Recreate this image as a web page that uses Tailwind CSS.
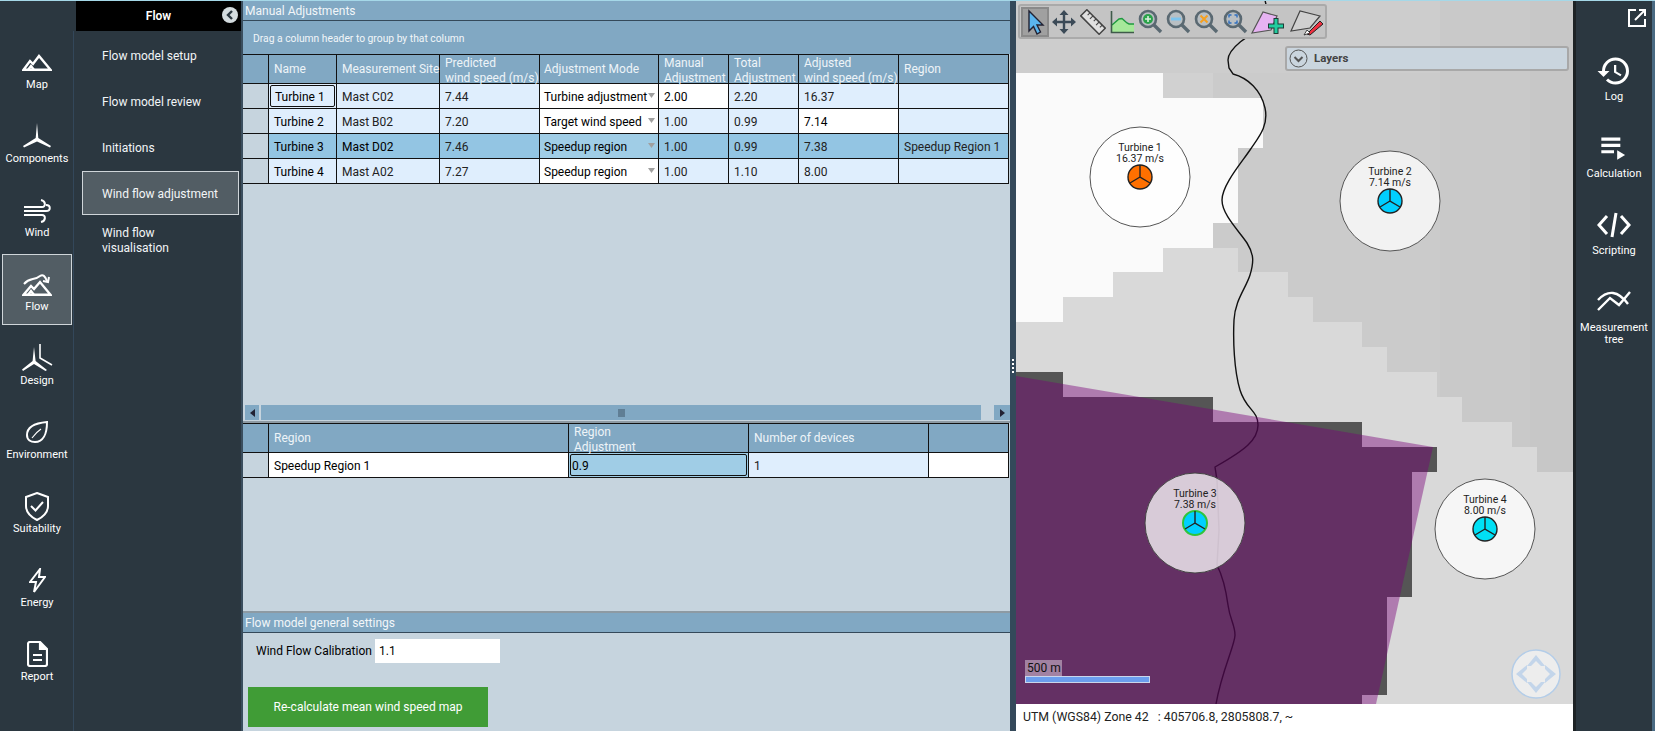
<!DOCTYPE html>
<html lang="en">
<head>
    <meta charset="UTF-8">
    <title>Wind flow adjustment</title>
    <script src="https://cdn.jsdelivr.net/npm/@tailwindcss/browser@4"></script>
</head>
<body class="w-[1655px] h-[731px] overflow-hidden bg-[#2b3740] font-['Roboto',sans-serif] text-[12px]">
<div class="h-px bg-[#a5d8e8]"></div>
<div class="flex h-[730px]">

    <!-- Left rail -->
    <div class="w-[73px] shrink-0 pt-[31px] pl-[2px] text-[11px] text-white">
        <div class="w-[70px] h-[71px] mb-[3px] border border-transparent pt-[13px] flex flex-col items-center">
            <div class="h-[32px] flex items-center"><svg width="30" height="17" viewBox="0 0 30 17" fill="none" stroke="white" stroke-width="2.4"><path d="M1.5 15.8H28.5L17 2L11 10L8 7Z"/><path d="M6 16L9 12L12 16"/></svg></div>
            <div class="-mt-px h-4 leading-4">Map</div>
        </div>
        <div class="w-[70px] h-[71px] mb-[3px] border border-transparent pt-[13px] flex flex-col items-center">
            <div class="h-[32px] flex items-center"><svg width="30" height="26" viewBox="0 0 30 26" fill="white"><path d="M15 0L16.3 15L29 23L28 24.5L15 18.5L2 24.5L1 23L13.7 15Z"/></svg></div>
            <div class="-mt-px h-4 leading-4">Components</div>
        </div>
        <div class="w-[70px] h-[71px] mb-[3px] border border-transparent pt-[13px] flex flex-col items-center">
            <div class="h-[32px] flex items-center"><svg width="28" height="25" viewBox="0 0 28 25" fill="none" stroke="white" stroke-width="2"><path d="M1 9H19C23 9 23 3 18 2"/><path d="M1 13H23C28 13 28 7 23 7"/><path d="M1 17H19C23 17 23 23 18 24"/></svg></div>
            <div class="-mt-px h-4 leading-4">Wind</div>
        </div>
        <div class="w-[70px] h-[71px] mb-[3px] border border-[#cfd5d9] bg-[#525d64] pt-[13px] flex flex-col items-center">
            <div class="h-[32px] flex items-center"><svg width="30" height="23" viewBox="0 0 30 23" fill="none" stroke="white" stroke-width="2.4"><path d="M1.5 21.8H28.5L18 9L12 16L9 13Z"/><path d="M6 22L9 18L12 22"/><path d="M2 11C8 4 12 8 18 3C21 1 23 3 25 8" stroke-width="2"/><path d="M21 8L26 9L27 4" stroke-width="2"/></svg></div>
            <div class="-mt-px h-4 leading-4">Flow</div>
        </div>
        <div class="w-[70px] h-[71px] mb-[3px] border border-transparent pt-[13px] flex flex-col items-center">
            <div class="h-[32px] flex items-center"><svg width="32" height="28" viewBox="0 0 32 28" fill="white"><path d="M13 3L14.6 17L26 26L24.5 27L13 20L2 27L1 25.5L11.6 17Z"/><path d="M19 0V14L31 21" fill="none" stroke="white" stroke-width="1.6"/></svg></div>
            <div class="-mt-px h-4 leading-4">Design</div>
        </div>
        <div class="w-[70px] h-[71px] mb-[3px] border border-transparent pt-[13px] flex flex-col items-center">
            <div class="h-[32px] flex items-center"><svg width="22" height="22" viewBox="0 0 22 22" fill="none" stroke="white" stroke-width="2"><path d="M21 1C10 2 1 5 1 14C1 19 5 21 9 21C17 21 21 13 21 1Z"/><path d="M6 17C9 13 12 10 15 8" stroke-width="1.2"/></svg></div>
            <div class="-mt-px h-4 leading-4">Environment</div>
        </div>
        <div class="w-[70px] h-[71px] mb-[3px] border border-transparent pt-[13px] flex flex-col items-center">
            <div class="h-[32px] flex items-center"><svg width="24" height="29" viewBox="0 0 24 29" fill="none" stroke="white" stroke-width="2"><path d="M12 1L23 5V14C23 21 17 25.5 12 28C7 25.5 1 21 1 14V5Z"/><path d="M6 14L10.5 18.5L18 10"/></svg></div>
            <div class="-mt-px h-4 leading-4">Suitability</div>
        </div>
        <div class="w-[70px] h-[71px] mb-[3px] border border-transparent pt-[13px] flex flex-col items-center">
            <div class="h-[32px] flex items-center"><svg width="17" height="25" viewBox="0 0 17 25" fill="none" stroke="white" stroke-width="2"><path d="M11 1L1 14H7L5 24L16 9H10Z"/></svg></div>
            <div class="-mt-px h-4 leading-4">Energy</div>
        </div>
        <div class="w-[70px] h-[71px] mb-[3px] border border-transparent pt-[13px] flex flex-col items-center">
            <div class="h-[32px] flex items-center"><svg width="21" height="26" viewBox="0 0 21 26" fill="none" stroke="white" stroke-width="2.2"><path d="M3 1H13L20 8V23A2 2 0 0 1 18 25H3A2 2 0 0 1 1 23V3A2 2 0 0 1 3 1Z"/><path d="M13 1V8H20" fill="white"/><path d="M6 14H15M6 19H15"/></svg></div>
            <div class="-mt-px h-4 leading-4">Report</div>
        </div>
    </div>

    <!-- Flow menu -->
    <div class="w-[168px] shrink-0 flex flex-col text-[#f2f5f7]">
        <div class="h-[30px] ml-[3px] bg-black relative flex items-center justify-center text-white font-semibold">
            Flow
            <div class="absolute right-[3px] top-[6px] w-4 h-4 rounded-full bg-[#d4dcdf] flex items-center justify-center"><svg width="8" height="10" viewBox="0 0 8 10" fill="none" stroke="#2b3740" stroke-width="2.4"><path d="M6 1L2 5L6 9"/></svg></div>
        </div>
        <div class="flex-1 border-l border-[#33475a] pl-[8px] pr-[2px]">
            <div class="h-[46px] pl-[20px] flex items-center mt-[2px]">Flow model setup</div>
            <div class="h-[46px] pl-[20px] flex items-center">Flow model review</div>
            <div class="h-[46px] pl-[20px] flex items-center">Initiations</div>
            <div class="h-[44px] pl-[19px] pt-px flex items-center border border-[#cfd5d9] bg-[#525d64]">Wind flow adjustment</div>
            <div class="pl-[20px] pt-[11px] leading-[15px]">Wind flow<br>visualisation</div>
        </div>
    </div>
    <div class="w-[2px] shrink-0 bg-[#3a4e5e]"></div>

    <!-- Main panel -->
    <div class="w-[767px] shrink-0 flex flex-col bg-[#c6d4de] text-[#222]">
        <div class="h-[420px] flex flex-col pb-px">
            <div class="h-[20px] shrink-0 bg-[#81a8c3] border-b border-[#34495a] px-[2px] leading-[20px] text-[#f2f6f9]">Manual Adjustments</div>
            <div class="h-[33px] shrink-0 bg-[#81a8c3] pl-[10px] pt-[9px] text-[10.3px] leading-[18px] text-[#f2f6f9]">Drag a column header to group by that column</div>
            <table class="table-fixed w-[766px] border-separate border-spacing-0 border-t border-[#111] whitespace-nowrap">
                <colgroup>
                    <col class="w-[26px]"><col class="w-[68px]"><col class="w-[103px]"><col class="w-[100px]"><col class="w-[119px]"><col class="w-[70px]"><col class="w-[70px]"><col class="w-[100px]"><col class="w-[110px]">
                </colgroup>
                <tr class="h-[29px] bg-[#81a8c3] text-[#eef4f8] leading-[15px] *:border-r *:border-b *:border-[#111] *:px-[5px] *:pt-px *:font-normal *:text-left">
                    <th></th><th>Name</th><th>Measurement Site</th><th><div class="-mt-[2px] -mb-[3px] pt-[2px]">Predicted<br>wind speed (m/s)</div></th><th class="!pl-[4px]">Adjustment Mode</th><th><div class="-mt-[2px] -mb-[3px] pt-[2px]">Manual<br>Adjustment</div></th><th><div class="-mt-[2px] -mb-[3px] pt-[2px]">Total<br>Adjustment</div></th><th><div class="-mt-[2px] -mb-[3px] pt-[2px]">Adjusted<br>wind speed (m/s)</div></th><th>Region</th>
                </tr>
                <tr class="h-[25px] bg-[#dfeefd] *:border-r *:border-b *:border-[#111] *:px-[5px] *:pt-px">
                    <td class="bg-[#c6d4de]"></td>
                    <td class="!p-[1px] text-black"><div class="h-[22px] border border-[#111] rounded-[2px] pl-[4px] leading-[22px]">Turbine 1</div></td>
                    <td>Mast C02</td><td>7.44</td>
                    <td class="bg-white text-black relative overflow-hidden !pl-[4px]">Turbine adjustment<svg class="absolute right-[3px] top-[9px]" width="7" height="5"><path d="M0 0H7L3.5 5Z" fill="#a0a0a0"/></svg></td>
                    <td class="bg-white text-black">2.00</td><td>2.20</td><td>16.37</td><td></td>
                </tr>
                <tr class="h-[25px] bg-[#dfeefd] *:border-r *:border-b *:border-[#111] *:px-[5px] *:pt-px">
                    <td class="bg-[#c6d4de]"></td>
                    <td class="text-black">Turbine 2</td>
                    <td>Mast B02</td><td>7.20</td>
                    <td class="bg-white text-black relative overflow-hidden !pl-[4px]">Target wind speed<svg class="absolute right-[3px] top-[9px]" width="7" height="5"><path d="M0 0H7L3.5 5Z" fill="#a0a0a0"/></svg></td>
                    <td>1.00</td><td>0.99</td><td class="bg-white text-black">7.14</td><td></td>
                </tr>
                <tr class="h-[25px] bg-[#93c5e3] *:border-r *:border-b *:border-[#111] *:px-[5px] *:pt-px">
                    <td class="bg-[#c6d4de]"></td>
                    <td class="text-black">Turbine 3</td>
                    <td class="text-black">Mast D02</td><td>7.46</td>
                    <td class="bg-[#a0cde6] text-black relative overflow-hidden !pl-[4px]">Speedup region<svg class="absolute right-[3px] top-[9px]" width="7" height="5"><path d="M0 0H7L3.5 5Z" fill="#a0a0a0"/></svg></td>
                    <td>1.00</td><td>0.99</td><td>7.38</td><td>Speedup Region 1</td>
                </tr>
                <tr class="h-[25px] bg-[#dfeefd] *:border-r *:border-b *:border-[#111] *:px-[5px] *:pt-px">
                    <td class="bg-[#c6d4de]"></td>
                    <td class="text-black">Turbine 4</td>
                    <td>Mast A02</td><td>7.27</td>
                    <td class="bg-white text-black relative overflow-hidden !pl-[4px]">Speedup region<svg class="absolute right-[3px] top-[9px]" width="7" height="5"><path d="M0 0H7L3.5 5Z" fill="#a0a0a0"/></svg></td>
                    <td>1.00</td><td>1.10</td><td>8.00</td><td></td>
                </tr>
            </table>
            <div class="mt-auto h-[15px] shrink-0 flex pl-[2px]">
                <div class="w-[14px] bg-[#81a8c3] flex items-center justify-center"><svg width="5" height="8"><path d="M5 0V8L0 4Z" fill="#223"/></svg></div>
                <div class="w-[720px] ml-[2px] bg-[#81a8c3] flex items-center justify-center"><svg width="7" height="8" stroke="#3f5566"><path d="M1 0V8M3 0V8M5 0V8M7 0V8"/></svg></div>
                <div class="w-[16px] ml-auto bg-[#81a8c3] flex items-center justify-center"><svg width="5" height="8"><path d="M0 0V8L5 4Z" fill="#223"/></svg></div>
            </div>
        </div>

        <div class="flex-1 border-t-2 border-b-2 border-[#8d9aa3]">
            <table class="table-fixed w-[766px] border-separate border-spacing-0 border-t border-[#111] whitespace-nowrap">
                <colgroup>
                    <col class="w-[26px]"><col class="w-[300px]"><col class="w-[180px]"><col class="w-[180px]"><col class="w-[80px]">
                </colgroup>
                <tr class="h-[29px] bg-[#81a8c3] text-[#eef4f8] leading-[15px] *:border-r *:border-b *:border-[#111] *:px-[5px] *:pt-px *:font-normal *:text-left">
                    <th></th><th>Region</th><th><div class="-mt-[2px] -mb-[3px] pt-[2px]">Region<br>Adjustment</div></th><th>Number of devices</th><th></th>
                </tr>
                <tr class="h-[25px] *:border-r *:border-b *:border-[#111] *:px-[5px] *:pt-px">
                    <td class="bg-[#c6d4de]"></td>
                    <td class="bg-white text-black">Speedup Region 1</td>
                    <td class="bg-[#a0cde6] !p-[1px] text-black"><div class="h-[22px] border border-[#111] rounded-[2px] pl-[1px] leading-[22px]">0.9</div></td>
                    <td class="bg-[#dfeefd]">1</td>
                    <td class="bg-white"></td>
                </tr>
            </table>
        </div>

        <div class="h-[118px] shrink-0">
            <div class="h-[20px] bg-[#81a8c3] border-b border-[#34495a] px-[2px] leading-[20px] text-[#f2f6f9]">Flow model general settings</div>
            <div class="flex items-center pl-[13px] pt-[6px]">
                <span class="w-[119px] text-black">Wind Flow Calibration</span>
                <div class="w-[125px] h-[24px] bg-white pl-[4px] leading-[24px] text-black">1.1</div>
            </div>
            <div class="ml-[5px] mt-[24px] w-[240px] h-[40px] bg-[#409c36] flex items-center justify-center text-white text-[12px]">Re-calculate mean wind speed map</div>
        </div>
    </div>

    <!-- Splitter -->
    <div class="w-[6px] shrink-0 bg-[#34495a] flex flex-col items-center justify-center gap-[2px] pb-[1px]">
        <div class="w-[2px] h-[2px] bg-white"></div><div class="w-[2px] h-[2px] bg-white"></div><div class="w-[2px] h-[2px] bg-white"></div><div class="w-[2px] h-[2px] bg-white"></div>
    </div>

    <!-- Map -->
    <div class="w-[557px] shrink-0 flex flex-col bg-white">
        <div class="relative h-[703px] overflow-hidden">
            <svg class="block" width="557" height="703" viewBox="1016 1 557 703">
                <rect x="1016" y="1" width="557" height="703" fill="#cbcbcb"/>
                <rect x="1440" y="1" width="133" height="480" fill="#c9c9c9"/>
                <rect x="1530" y="1" width="43" height="480" fill="#c7c7c7"/>
                <rect x="1016" y="1" width="424" height="72" fill="#cdcdcd"/>
                <rect x="1163" y="73" width="50" height="25" fill="#d1d1d1"/>
                <polygon fill="#fafafa" points="1016,73 1163,73 1163,98 1263,98 1263,148 1238,148 1238,223 1213,223 1213,248 1163,248 1163,272 1113,272 1113,297 1063,297 1063,322 1016,322"/>
                <polygon fill="#d9d9d9" points="1016,322 1063,322 1063,297 1113,297 1113,272 1163,272 1163,248 1238,248 1238,272 1288,272 1288,297 1313,297 1313,322 1362,322 1362,347 1387,347 1387,372 1437,372 1437,397 1462,397 1462,422 1512,422 1512,447 1537,447 1537,472 1573,472 1573,704 1016,704"/>
                <polygon fill="#555555" points="1016,372 1063,372 1063,397 1213,397 1213,422 1362,422 1362,447 1437,447 1437,472 1412,472 1412,597 1387,597 1387,695 1362,695 1362,704 1016,704"/>
                <path fill="none" stroke="#111" stroke-width="1.4" d="M1265 0L1268 14L1262 28C1250 34 1228 48 1228 60L1229 68L1233 74C1248 78 1261 90 1265 108S1258 138 1250 150S1222 185 1222 200S1240 232 1247 243S1254 262 1250 275S1235 300 1234 320S1234 370 1240 390S1258 410 1258 425S1245 450 1215 467L1217 480L1219 530L1217 565C1222 575 1226 590 1228 605S1235 625 1235 635S1222 670 1216 704"/>
                <polygon fill="#790079" fill-opacity="0.43" points="1016,376 1433,447 1376,704 1016,704"/>

                <circle cx="1140" cy="177" r="50" fill="white" fill-opacity="0.75" stroke="#555"/>
                <circle cx="1390" cy="201" r="50" fill="white" fill-opacity="0.75" stroke="#555"/>
                <circle cx="1195" cy="523" r="50" fill="white" fill-opacity="0.75" stroke="#444"/>
                <circle cx="1485" cy="529" r="50" fill="white" fill-opacity="0.75" stroke="#555"/>

                <g font-size="10.5" text-anchor="middle" fill="#222">
                    <text x="1140" y="151">Turbine 1</text><text x="1140" y="161.5">16.37 m/s</text>
                    <text x="1390" y="175">Turbine 2</text><text x="1390" y="185.5">7.14 m/s</text>
                    <text x="1195" y="497">Turbine 3</text><text x="1195" y="507.5">7.38 m/s</text>
                    <text x="1485" y="503">Turbine 4</text><text x="1485" y="513.5">8.00 m/s</text>
                </g>

                <g stroke="#222" stroke-width="1.4">
                    <circle cx="1140" cy="177" r="12" fill="#ff7000"/>
                    <path fill="none" d="M1140 165V177L1150 183M1140 177L1130 183"/>
                    <circle cx="1390" cy="201" r="12" fill="#00cfff"/>
                    <path fill="none" d="M1390 189V201L1400 207M1390 201L1380 207"/>
                    <circle cx="1195" cy="523" r="12" fill="#00cfff" stroke="#2fc43c" stroke-width="2"/>
                    <path fill="none" d="M1195 511V523L1205 529M1195 523L1185 529"/>
                    <circle cx="1485" cy="529" r="12" fill="#00e0f5"/>
                    <path fill="none" d="M1485 517V529L1495 535M1485 529L1475 535"/>
                </g>

                <!-- nav control -->
                <circle cx="1536" cy="674" r="24" fill="#ededed" stroke="#b4cde8" stroke-width="1.5"/>
                <g fill="#c3d5ea">
                    <path d="M1536 655L1545 666H1541L1536 661L1531 666H1527Z"/>
                    <path d="M1536 693L1545 682H1541L1536 687L1531 682H1527Z"/>
                    <path d="M1516 674L1527 665V669L1522 674L1527 679V683Z"/>
                    <path d="M1556 674L1545 665V669L1550 674L1545 679V683Z"/>
                </g>
            </svg>

            <!-- Toolbar -->
            <div class="absolute left-[2px] top-[3px] w-[309px] h-[35px] rounded-[3px] border-2 border-[#aaaaaa] bg-[#c4c4c4] flex items-center pl-px">
                <div class="w-[28px] h-[30px] mr-[1px] bg-[#a0a0a0] border-2 border-[#8a8a8a] flex items-center justify-center"><svg width="24" height="26" viewBox="0 0 24 26"><path d="M6 2V22L10.5 17.5L14 25L17.5 23L14 16H20Z" fill="#5bb5ee" stroke="#223" stroke-width="1.4"/></svg></div>
                <div class="w-[29px] flex justify-center"><svg width="24" height="24" viewBox="0 0 24 24" fill="#3b4a57"><path d="M12 3V21M3 12H21" stroke="#3b4a57" stroke-width="2.4"/><path d="M12 0L16.5 5H7.5ZM12 24L16.5 19H7.5ZM0 12L5 7.5V16.5ZM24 12L19 7.5V16.5Z"/></svg></div>
                <div class="w-[29px] flex justify-center"><svg width="26" height="26" viewBox="0 0 24 24"><g transform="rotate(45 12 12)"><rect x="0" y="8" width="24" height="8" fill="#e0e0e0" stroke="#444" stroke-width="1.4"/><path d="M4 8V11M8 8V12M12 8V11M16 8V12M20 8V11" stroke="#444"/></g></svg></div>
                <div class="w-[28px] flex justify-center"><svg width="24" height="24" viewBox="0 0 24 24"><path d="M2 15L9 9L12 8.5L17 13L19 14H24V22H2Z" fill="#a6e89a"/><path d="M2 15L9 9L12 8.5L17 13L19 14H24" fill="none" stroke="#1f9a3f" stroke-width="1.4"/><path d="M1.5 1V22.5H24" fill="none" stroke="#3f5a4a" stroke-width="1.6"/></svg></div>
                <div class="w-[29px] flex justify-center"><svg width="25" height="25" viewBox="0 0 25 25"><path d="M16 16L23 23" stroke="#5a6972" stroke-width="3.4"/><circle cx="10" cy="10" r="8" fill="#b9bfc3" stroke="#5a6972" stroke-width="2.6"/><circle cx="10" cy="10" r="5" fill="#2aa24a"/><path d="M10 7V13M7 10H13" stroke="#d8f0dc" stroke-width="1.6"/></svg></div>
                <div class="w-[28px] flex justify-center"><svg width="25" height="25" viewBox="0 0 25 25"><path d="M16 16L23 23" stroke="#5a6972" stroke-width="3.4"/><circle cx="10" cy="10" r="8" fill="#b9bfc3" stroke="#5a6972" stroke-width="2.6"/><path d="M5 10H15" stroke="#7cc4ee" stroke-width="3"/></svg></div>
                <div class="w-[29px] flex justify-center"><svg width="25" height="25" viewBox="0 0 25 25"><path d="M16 16L23 23" stroke="#5a6972" stroke-width="3.4"/><circle cx="10" cy="10" r="8" fill="#b9bfc3" stroke="#5a6972" stroke-width="2.6"/><path d="M6.5 6.5L13.5 13.5M13.5 6.5L6.5 13.5" stroke="#f5a020" stroke-width="2"/></svg></div>
                <div class="w-[28px] flex justify-center"><svg width="25" height="25" viewBox="0 0 25 25"><path d="M16 16L23 23" stroke="#5a6972" stroke-width="3.4"/><circle cx="10" cy="10" r="8" fill="#b9bfc3" stroke="#5a6972" stroke-width="2.6"/><path d="M6 8.5V6H8.5M11.5 6H14V8.5M14 11.5V14H11.5M8.5 14H6V11.5" fill="none" stroke="#2f6fc0" stroke-width="1.4"/></svg></div>
                <div class="w-[39px] flex justify-center"><svg width="37" height="26" viewBox="0 0 37 26"><path d="M2 24L13 3L27 7L21 21Z" fill="#e6b3f2" stroke="#555" stroke-width="1.2"/><path d="M26 9V25M18 17H34" stroke="#1d3b34" stroke-width="5"/><path d="M26 10V24M19 17H33" stroke="#22cc9f" stroke-width="3"/></svg></div>
                <div class="w-[37px] flex justify-center"><svg width="36" height="28" viewBox="0 0 36 28"><path d="M2 23L11 3L31 8L21 20Z" fill="#d0d0d0" stroke="#444" stroke-width="1.2"/><path d="M18 26L31 13L34 16L21 27Z" fill="#ee3040" stroke="#222"/><path d="M15 27L18 22L21 25Z" fill="white" stroke="#222" stroke-width="0.8"/></svg></div>
            </div>

            <!-- Layers -->
            <div class="absolute left-[269px] top-[45px] w-[284px] h-[25px] rounded-[3px] border-2 border-[#a8a8a8] bg-[#cad5de] flex items-center pl-[2px] text-[#444] font-bold text-[11.5px]">
                <svg width="19" height="19" viewBox="0 0 19 19" fill="none" stroke="#555"><circle cx="9.5" cy="9.5" r="8.5"/><path d="M5.5 8L9.5 12L13.5 8" stroke-width="2"/></svg>
                <span class="ml-[6px]">Layers</span>
            </div>

            <!-- Scale -->
            <div class="absolute left-[9px] top-[659px]">
                <div class="w-[37px] h-[16px] bg-white/40 pl-[2px] text-[12px] leading-[17px] text-[#111] whitespace-nowrap">500 m</div>
                <div class="w-[125px] h-[7px] bg-[#6b9eee] border border-[#c9d6ec]"></div>
            </div>
        </div>
        <div class="flex-1 pl-[7px] flex items-center text-[12.3px] text-[#222] whitespace-pre">UTM (WGS84) Zone 42   : 405706.8, 2805808.7, ~</div>
    </div>

    <!-- Right rail -->
    <div class="w-[3px] shrink-0 bg-[#1e2326]"></div>
    <div class="w-[76px] shrink-0 text-[11px] text-white">
        <div class="h-[39px] flex justify-end items-end pr-[6px] pb-[13px]"><svg width="18" height="18" viewBox="0 0 18 18" fill="none" stroke="white" stroke-width="2"><path d="M8 1H1V17H17V10"/><path d="M11 1H17V7"/><path d="M17 1L7 11"/></svg></div>
        <div class="h-[77px] pt-[11px] flex flex-col items-center">
            <div class="h-[40px] flex items-center"><svg width="36" height="36" viewBox="0 0 24 24" fill="white"><path d="M13 3a9 9 0 0 0-9 9H1l3.89 3.89.07.14L9 12H6c0-3.87 3.13-7 7-7s7 3.13 7 7-3.13 7-7 7c-1.93 0-3.68-.79-4.94-2.06l-1.42 1.42A8.954 8.954 0 0 0 13 21a9 9 0 0 0 0-18zm-1 5v5l4.28 2.54.72-1.21-3.5-2.08V8H12z"/></svg></div>
            <div class="-mt-[2px] h-4 leading-4">Log</div>
        </div>
        <div class="h-[77px] pt-[10px] flex flex-col items-center">
            <div class="h-[40px] flex items-center"><svg width="38" height="38" viewBox="0 0 24 24" fill="white"><path d="M4 10h12v2H4zm0-4h12v2H4zm0 8h8v2H4zm10 0v6l5-3z"/></svg></div>
            <div class="-mt-[1px] h-4 leading-4">Calculation</div>
        </div>
        <div class="h-[77px] pt-[11px] flex flex-col items-center">
            <div class="h-[40px] flex items-center"><svg width="34" height="26" viewBox="0 0 34 26" fill="none" stroke="white" stroke-width="3"><path d="M10 4L2 13L10 22"/><path d="M24 4L32 13L24 22"/><path d="M19 1L15 25"/></svg></div>
            <div class="-mt-[2px] h-4 leading-4">Scripting</div>
        </div>
        <div class="h-[77px] pt-[9px] flex flex-col items-center">
            <div class="h-[40px] flex items-center"><svg width="34" height="22" viewBox="0 0 34 22" fill="none" stroke="white" stroke-width="2.4"><path d="M1 11Q16 -5 31 15"/><path d="M1 21L13 9L22 16L33 3"/></svg></div>
            <div class="mt-[2px] leading-[12px] text-center">Measurement<br>tree</div>
        </div>
    </div>
    <div class="w-[3px] shrink-0 bg-[#4a6a82]"></div>
</div>
</body>
</html>
